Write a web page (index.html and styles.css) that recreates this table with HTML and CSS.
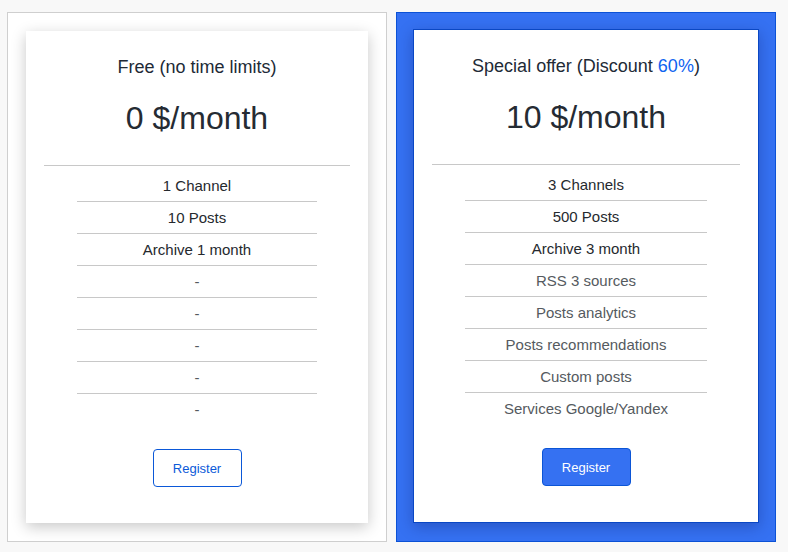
FILE: index.html
```html
<!DOCTYPE html>
<html>
<head>
<meta charset="utf-8">
<link rel="stylesheet" href="styles.css">
</head>
<body>
<div class="plans">
  <div class="plan-box">
    <div class="card">
      <div class="title">Free (no time limits)</div>
      <div class="price">0 $/month</div>
      <hr class="sep">
      <ul class="features">
        <li class="strong">1 Channel</li>
        <li class="strong">10 Posts</li>
        <li class="strong">Archive 1 month</li>
        <li>-</li>
        <li>-</li>
        <li>-</li>
        <li>-</li>
        <li>-</li>
      </ul>
      <div class="actions"><button class="btn btn-outline">Register</button></div>
    </div>
  </div>
  <div class="plan-box plan-box-featured">
    <div class="card card-featured">
      <div class="title">Special offer (Discount <span class="accent">60%</span>)</div>
      <div class="price">10 $/month</div>
      <hr class="sep">
      <ul class="features">
        <li class="strong">3 Channels</li>
        <li class="strong">500 Posts</li>
        <li class="strong">Archive 3 month</li>
        <li>RSS 3 sources</li>
        <li>Posts analytics</li>
        <li>Posts recommendations</li>
        <li>Custom posts</li>
        <li>Services Google/Yandex</li>
      </ul>
      <div class="actions"><button class="btn btn-primary">Register</button></div>
    </div>
  </div>
</div>
</body>
</html>
```

FILE: styles.css
```css
html, body {
  margin: 0;
  padding: 0;
  background: #f8f8f8;
  font-family: "Liberation Sans", Arial, sans-serif;
  color: #212529;
}

.plans {
  display: flex;
  align-items: stretch;
  gap: 9px;
  padding: 12px 0 0 7px;
}

.plan-box {
  box-sizing: border-box;
  width: 380px;
  border: 1px solid #cfcfcf;
  background: #ffffff;
  padding: 18px 17px 18px 18px;
}

.plan-box-featured {
  background: #3571f2;
  border-color: #0c52d6;
  padding: 16px 16px 18px 16px;
}

.card {
  box-sizing: border-box;
  width: 342px;
  background: #ffffff;
  padding: 24px 18px 36px;
  text-align: center;
  box-shadow: 0 4px 14px rgba(0, 0, 0, 0.22);
}

.card-featured {
  width: 346px;
  border: 1px solid #0a47c4;
  box-shadow: 0 4px 14px rgba(0, 0, 60, 0.25);
}

.title {
  font-size: 18px;
  line-height: 24px;
  color: #212a36;
}

.accent {
  color: #0d63f0;
}

.price {
  margin-top: 20px;
  font-size: 32px;
  line-height: 38px;
  color: #252b33;
}

.sep {
  margin: 28px 0 0;
  border: 0;
  border-top: 1px solid #c8c8c8;
  height: 0;
}

.features {
  list-style: none;
  margin: 4px 33px 0;
  padding: 0;
}

.features li {
  box-sizing: border-box;
  height: 32px;
  line-height: 31px;
  font-size: 15px;
  color: #555a60;
  border-bottom: 1px solid #c8c8c8;
}

.features li.strong {
  color: #25292e;
}

.features li:last-child {
  border-bottom: 0;
  height: 31px;
}

.actions {
  margin-top: 24px;
  display: flex;
  justify-content: center;
}

.btn {
  box-sizing: border-box;
  width: 89px;
  height: 38px;
  border-radius: 4px;
  font-family: "Liberation Sans", Arial, sans-serif;
  font-size: 13px;
  padding: 0;
  cursor: pointer;
}

.btn-outline {
  background: #ffffff;
  border: 1px solid #0b58d8;
  color: #0b5ad9;
}

.btn-primary {
  background: #3571f2;
  border: 1px solid #0b55d6;
  color: #ffffff;
}
```
